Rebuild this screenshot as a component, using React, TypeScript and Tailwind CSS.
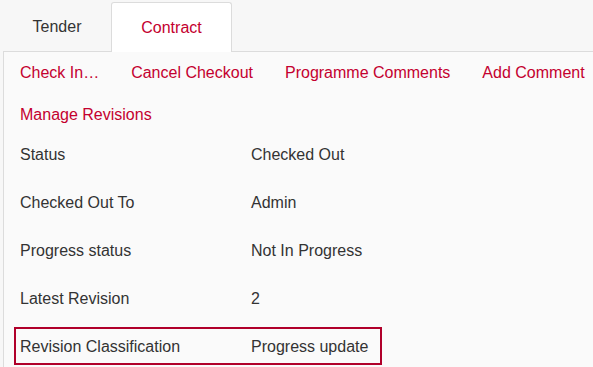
const links = ['Check In…', 'Cancel Checkout', 'Programme Comments', 'Add Comment']

const rows = [
  { label: 'Status', value: 'Checked Out' },
  { label: 'Checked Out To', value: 'Admin' },
  { label: 'Progress status', value: 'Not In Progress' },
  { label: 'Latest Revision', value: '2' },
  { label: 'Revision Classification', value: 'Progress update', highlight: true },
]

export default function App() {
  return (
    <div
      className="w-[593px] h-[367px] overflow-hidden bg-[#f7f7f7] text-[16px] text-[#333]"
      style={{ fontFamily: '"Liberation Sans", Arial, sans-serif' }}
    >
      {/* Tabs */}
      <div className="flex h-[52px] pl-[3px] pt-[2px]">
        <div className="flex w-[108px] items-center justify-center text-[#333]">Tender</div>
        <div className="relative z-10 flex w-[121px] items-center justify-center rounded-t-[3px] border border-b-0 border-[#dcdcdc] bg-white text-[#c4002f]">
          Contract
        </div>
      </div>

      {/* Panel */}
      <div className="-mt-px ml-[3px] h-[400px] border-l border-t border-[#dcdcdc] bg-[#fafafa] pl-[10px]">
        <div className="mt-[1px] flex h-[38px] items-center gap-8 pl-[6px] pt-[2px] text-[#c4002f]">
          {links.map(l => (
            <span key={l} className="whitespace-nowrap">{l}</span>
          ))}
        </div>
        <div className="mt-[4px] flex h-[38px] items-center pl-[6px] pt-[2px] text-[#c4002f]">Manage Revisions</div>

        <div className="mt-[2px] flex flex-col gap-[10px]">
          {rows.map(r => (
            <div
              key={r.label}
              className={`flex h-[38px] w-[368px] items-center border-2 pl-[4px] pt-[2px] ${
                r.highlight ? 'border-[#b0002a]' : 'border-transparent'
              }`}
            >
              <span className="w-[231px]">{r.label}</span>
              <span>{r.value}</span>
            </div>
          ))}
        </div>
      </div>
    </div>
  )
}
